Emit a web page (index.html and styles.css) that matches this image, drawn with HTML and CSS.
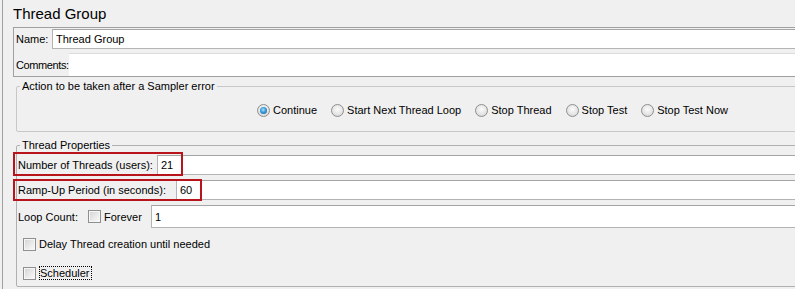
FILE: index.html
```html
<!DOCTYPE html>
<html>
<head>
  <meta charset="utf-8">
  <title>Thread Group</title>
  <link rel="stylesheet" href="styles.css">
</head>
<body>
  <div class="panel">
    <h1 class="title">Thread Group</h1>

    <div class="names">
      <div class="row name-row">
        <span class="lbl lbl-name">Name:</span>
        <div class="field">Thread Group</div>
      </div>
      <div class="row comments-row">
        <span class="lbl lbl-comments">Comments:</span>
        <div class="field area"></div>
      </div>
    </div>

    <fieldset class="group action">
      <legend>Action to be taken after a Sampler error</legend>
      <div class="radios">
        <span class="opt"><i class="radio on"></i>Continue</span>
        <span class="opt"><i class="radio"></i>Start Next Thread Loop</span>
        <span class="opt"><i class="radio"></i>Stop Thread</span>
        <span class="opt"><i class="radio"></i>Stop Test</span>
        <span class="opt"><i class="radio"></i>Stop Test Now</span>
      </div>
    </fieldset>

    <fieldset class="group props">
      <legend>Thread Properties</legend>
      <div class="row prop threads">
        <span class="lbl">Number of Threads (users):</span>
        <div class="field">21</div>
        <span class="mark"></span>
      </div>
      <div class="row prop rampup">
        <span class="lbl">Ramp-Up Period (in seconds):</span>
        <div class="field">60</div>
        <span class="mark"></span>
      </div>
      <div class="row prop loop">
        <span class="lbl">Loop Count:</span>
        <span class="forever"><i class="check"></i>Forever</span>
        <div class="field">1</div>
      </div>
      <div class="row checkrow delay">
        <i class="check"></i><span>Delay Thread creation until needed</span>
      </div>
      <div class="row checkrow sched">
        <i class="check"></i><span class="focus">Scheduler</span>
      </div>
    </fieldset>
  </div>
</body>
</html>
```

FILE: styles.css
```css
/** base **/

html, body {
  margin: 0;
  padding: 0;
}
body {
  background: #f0f0f0;
  font-family: "Liberation Sans", Arial, sans-serif;
  font-size: 11px;
  color: #000;
  overflow: hidden;
  height: 289px;
}

.panel {
  margin-left: 2px;
  border-left: 1px solid #a0a0a0;
  height: 289px;
  overflow: hidden;
}

.title {
  margin: 0;
  padding: 4px 0 0 10px;
  font-size: 15px;
  font-weight: normal;
  line-height: 20px;
  height: 20px;
}

/** name / comments **/

.names {
  margin: 3px -20px 0 10px;
  border: 1px solid #a0a0a0;
  padding: 1px 0 0 1px;
}
.row {
  display: flex;
  align-items: center;
  position: relative;
  white-space: nowrap;
}
.lbl {
  box-sizing: border-box;
  padding-left: 1px;
  flex: none;
}
.lbl-name { width: 37px; }
.lbl-comments { width: 54px; letter-spacing: -0.4px; }

.name-row { height: 20px; }
.comments-row { height: 23px; margin-top: 4px; }

.field {
  flex: 1;
  box-sizing: border-box;
  height: 100%;
  background: #fff;
  border: 1px solid #b4b4b4;
  border-top-color: #a4a4a4;
  padding-left: 3px;
  display: flex;
  align-items: center;
}
.field.area {
  border: 0;
  border-top: 1px solid #dcdcdc;
}

/** titled groups **/

.group {
  margin: 0 -20px 0 13px;
  padding: 0;
  border: 1px solid #c8c8c8;
  border-radius: 2px;
  min-width: 0;
}
.group legend {
  margin-left: 3px;
  padding: 0 2px;
  line-height: 13px;
  font-size: 11px;
}
.action {
  margin-top: 3px;
  padding-bottom: 14px;
}
.props {
  margin-top: 7px;
  padding-bottom: 5px;
  border-color: #b0b0b0;
}

/** radios **/

.radios {
  margin-top: 10px;
  height: 14px;
  padding-left: 240px;
  display: flex;
  align-items: center;
}
.opt {
  display: inline-flex;
  align-items: center;
  margin-right: 14px;
  white-space: nowrap;
}
.radio {
  width: 13px;
  height: 13px;
  box-sizing: border-box;
  border: 1px solid #8e8f8f;
  border-radius: 50%;
  margin-right: 3px;
  background: radial-gradient(circle at 50% 40%, #fbfbfb 0%, #e6e6e6 55%, #cdcdcd 100%);
  display: inline-flex;
  align-items: center;
  justify-content: center;
}
.radio.on:after {
  content: '';
  width: 7px;
  height: 7px;
  border-radius: 50%;
  background: radial-gradient(circle at 45% 40%, #a6e3fb 0%, #3a9ad8 45%, #1b4f8a 100%);
}

/** checkboxes **/

.check {
  flex: none;
  width: 13px;
  height: 13px;
  box-sizing: border-box;
  border: 1px solid #8e8f8f;
  box-shadow: inset 0 0 0 1px #f6f6f6;
  background: linear-gradient(135deg, #d2d2d2 0%, #ececec 60%, #fafafa 100%);
  margin-right: 3px;
}

/** thread properties rows **/

.prop { height: 20px; margin-top: 5px; }
.threads { margin-top: 3px; }
.threads .lbl { width: 140px; }
.rampup .lbl { width: 159px; }
.loop { height: 23px; }
.loop .lbl { width: 71px; }
.forever {
  flex: none;
  width: 63px;
  display: inline-flex;
  align-items: center;
}

.checkrow {
  height: 16px;
  padding-left: 6px;
}
.delay { margin-top: 8px; }
.sched { margin-top: 13px; }
.focus {
  border: 1px dotted #000;
  padding: 0 1px 0 0;
  line-height: 12px;
}

/* red highlight boxes drawn on top of the rows */
.mark {
  position: absolute;
  box-sizing: border-box;
  border: 2px solid #b8141c;
  left: -4px;
}
.threads .mark {
  top: -3px;
  width: 170px;
  height: 24px;
}
.rampup .mark {
  top: -1px;
  width: 189px;
  height: 22px;
}
```
